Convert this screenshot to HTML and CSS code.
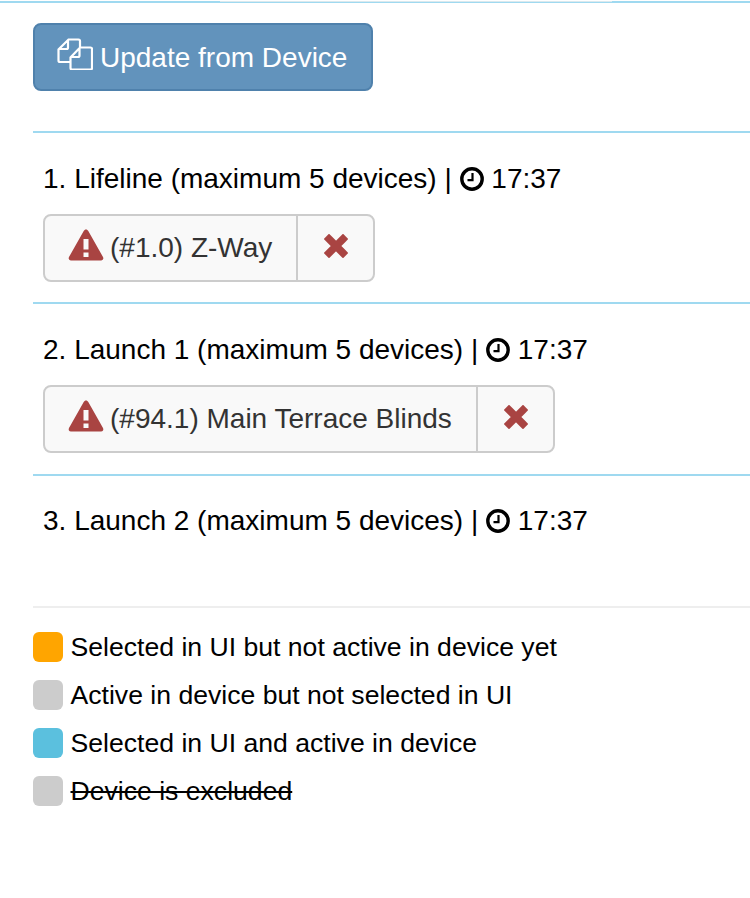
FILE: index.html
```html
<!DOCTYPE html>
<html lang="en">
<head>
<meta charset="utf-8">
<title>Associations</title>
<link rel="stylesheet" href="styles.css">
</head>
<body>
<div class="topline"><div class="tab-edge"></div></div>
<main class="panel">
  <div class="actions">
    <button class="update-btn" type="button">
      <svg class="ico-files" viewBox="0 0 36 32" width="36" height="32" aria-hidden="true"><path d="M15 1.500h6.500a1.500 1.500 0 0 1 1.500 1.500v7M13 24H3a1.500 1.500 0 0 1-1.500-1.500V11.500L11.500 1.500H15M11 2v7.500a1.500 1.500 0 0 1-1.500 1.500H2M23 9.500h10.500a1.500 1.500 0 0 1 1.500 1.500v19a1.500 1.500 0 0 1-1.500 1.500H15a1.500 1.500 0 0 1-1.500-1.500V19.500L23 9.500zM22.500 10v7.500a1.500 1.500 0 0 1-1.500 1.500h-7.500" fill="none" stroke="#fff" stroke-width="2.200"/></svg>
      <span class="btn-text">Update from Device</span>
    </button>
  </div>

  <section class="group">
    <p class="group-title">1. Lifeline (maximum 5 devices) | <svg class="ico-time" viewBox="0 0 24 24" width="24" height="24" aria-hidden="true"><circle cx="12" cy="12" r="10.200" fill="none" stroke="#000" stroke-width="3.400"/><path d="M12.500 6v7.200H7.500" fill="none" stroke="#000" stroke-width="2.200"/></svg> 17:37</p>
    <div class="chip">
      <span class="chip-label">
        <svg class="ico-warn" viewBox="0 0 36 32" width="36" height="32" aria-hidden="true"><path fill-rule="evenodd" d="M18 0.500c1 0 1.800.6 2.300 1.500l14.700 26c1 1.800-.2 3.500-2 3.500H3c-1.800 0-3-1.700-2-3.500L15.700 2c.5-.9 1.300-1.500 2.300-1.500zM15.500 10v10.500h5V10zm0 13.500v4.500h5v-4.500z" fill="#a94442"/></svg>
        <span>(#1.0) Z-Way</span>
      </span>
      <span class="chip-remove"><svg class="ico-x" viewBox="0 0 24 24" width="24" height="24" aria-hidden="true"><path d="M5 5 19 19M19 5 5 19" stroke="#a94442" stroke-width="7.500" fill="none" stroke-linecap="square"/></svg></span>
    </div>
  </section>

  <section class="group group-tall">
    <p class="group-title">2. Launch 1 (maximum 5 devices) | <svg class="ico-time" viewBox="0 0 24 24" width="24" height="24" aria-hidden="true"><circle cx="12" cy="12" r="10.200" fill="none" stroke="#000" stroke-width="3.400"/><path d="M12.500 6v7.200H7.500" fill="none" stroke="#000" stroke-width="2.200"/></svg> 17:37</p>
    <div class="chip">
      <span class="chip-label">
        <svg class="ico-warn" viewBox="0 0 36 32" width="36" height="32" aria-hidden="true"><path fill-rule="evenodd" d="M18 0.500c1 0 1.800.6 2.300 1.500l14.700 26c1 1.800-.2 3.500-2 3.500H3c-1.800 0-3-1.700-2-3.500L15.700 2c.5-.9 1.300-1.500 2.300-1.500zM15.500 10v10.500h5V10zm0 13.500v4.500h5v-4.500z" fill="#a94442"/></svg>
        <span>(#94.1) Main Terrace Blinds</span>
      </span>
      <span class="chip-remove"><svg class="ico-x" viewBox="0 0 24 24" width="24" height="24" aria-hidden="true"><path d="M5 5 19 19M19 5 5 19" stroke="#a94442" stroke-width="7.500" fill="none" stroke-linecap="square"/></svg></span>
    </div>
  </section>

  <section class="group group-empty">
    <p class="group-title group-title-last">3. Launch 2 (maximum 5 devices) | <svg class="ico-time" viewBox="0 0 24 24" width="24" height="24" aria-hidden="true"><circle cx="12" cy="12" r="10.200" fill="none" stroke="#000" stroke-width="3.400"/><path d="M12.500 6v7.200H7.500" fill="none" stroke="#000" stroke-width="2.200"/></svg> 17:37</p>
  </section>

  <ul class="legend">
    <li><i class="swatch swatch-orange"></i><span>Selected in UI but not active in device yet</span></li>
    <li><i class="swatch swatch-grey"></i><span>Active in device but not selected in UI</span></li>
    <li><i class="swatch swatch-blue"></i><span>Selected in UI and active in device</span></li>
    <li><i class="swatch swatch-grey"></i><span class="struck">Device is excluded</span></li>
  </ul>
</main>
</body>
</html>
```
FILE: styles.css
```css
html, body { margin: 0; padding: 0; background: #fff; }
body {
  font-family: "Liberation Sans", Arial, sans-serif;
  font-size: 28px;
  line-height: 38px;
  color: #000;
  overflow: hidden;
}
.topline {
  height: 2px;
  margin-top: 1px;
  background: #9fd9f0;
}
.tab-edge {
  width: 392px;
  height: 1px;
  margin-left: 220px;
  background: #dbe9ee;
}
.panel { margin-left: 33px; }
.actions { padding: 20px 0 40px; }
.update-btn {
  display: flex;
  align-items: center;
  gap: 7px;
  width: 340px;
  height: 68px;
  padding: 0 0 0 22px;
  border: 2px solid #4f81ac;
  border-radius: 8px;
  background: #6293bc;
  color: #fff;
  font: inherit;
}
.ico-files { flex: none; margin-top: -7px; }
.btn-text { padding-top: 2px; }
.group { border-top: 2px solid #9fd9f0; height: 169px; padding-left: 10px; }
.group-tall { height: 170px; }
.group-title { margin: 0; padding: 27px 0 16px; white-space: nowrap; }
.group-title-last { padding-top: 26px; }
.ico-time { vertical-align: -3px; }
.chip {
  display: inline-flex;
  height: 68px;
  box-sizing: border-box;
  border: 2px solid #ccc;
  border-radius: 8px;
  background: #f9f9f9;
  color: #333;
}
.chip-label {
  display: flex;
  align-items: center;
  gap: 6px;
  padding: 0 24px 0 23px;
}
.ico-warn { flex: none; margin-top: -6px; }
.chip-remove {
  display: flex;
  align-items: center;
  padding: 0 25px 0 26px;
  border-left: 2px solid #ccc;
}
.ico-x { display: block; margin-top: -4px; }
.group-empty { height: 130px; border-bottom: 2px solid #eee; }
.legend { list-style: none; margin: 0; padding: 15px 0 0; font-size: 26.6px; }
.legend li {
  display: flex;
  align-items: center;
  gap: 7.500px;
  height: 48px;
}
.swatch {
  flex: none;
  width: 30px;
  height: 30px;
  border-radius: 6px;
}
.swatch-orange { background: #ffa500; }
.swatch-grey { background: #ccc; }
.swatch-blue { background: #5bc0de; }
.struck { text-decoration: line-through; }
```
